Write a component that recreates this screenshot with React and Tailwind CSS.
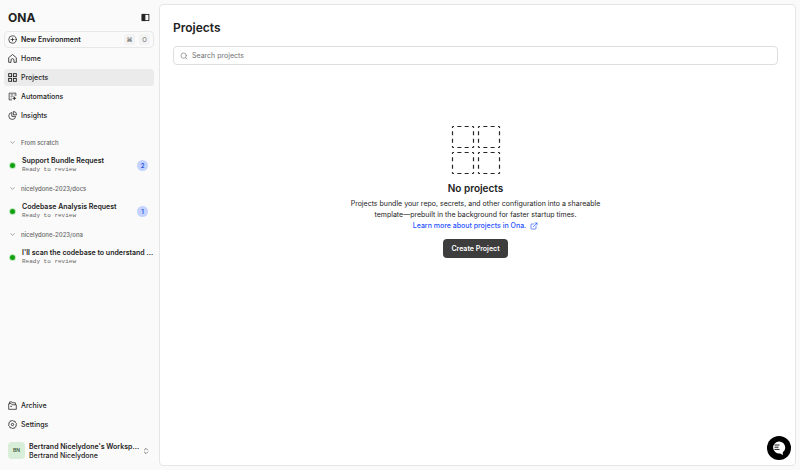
import { useState } from 'react';
import { ChevronDown, ChevronsUpDown, CirclePlus, ExternalLink, Search } from 'lucide-react';

const groups = [
  { name: 'From scratch', items: [{ title: 'Support Bundle Request', status: 'Ready to review', count: 2 }] },
  { name: 'nicelydone-2023/docs', items: [{ title: 'Codebase Analysis Request', status: 'Ready to review', count: 1 }] },
  { name: 'nicelydone-2023/ona', items: [{ title: "I'll scan the codebase to understand ...", status: 'Ready to review' }] },
];

// ── Icons ─────────────────────────────────────────────────────────────────────
function HomeIcon(props) {
  return (
    <svg viewBox="0 0 20 20" fill="none" stroke="currentColor" strokeWidth="1.8" strokeLinejoin="round" {...props}>
      <path d="M1.5 8.2 10 1.2l8.500 7V18.500h-5.300v-5a3.200 3.200 0 0 0-6.400 0v5H1.500Z" />
    </svg>
  );
}

function GridIcon(props) {
  return (
    <svg viewBox="0 0 20 20" fill="none" stroke="currentColor" strokeWidth="2" {...props}>
      <rect x="1.5" y="1.5" width="6.5" height="6.5" />
      <rect x="12" y="1.5" width="6.5" height="6.5" />
      <rect x="1.5" y="12" width="6.5" height="6.5" />
      <rect x="12" y="12" width="6.5" height="6.5" />
    </svg>
  );
}

function AutomationIcon(props) {
  return (
    <svg viewBox="0 0 20 20" fill="none" stroke="currentColor" strokeWidth="1.6" {...props}>
      <path d="M17.500 9V2.500h-15v15H9" />
      <path d="M6 6.500h5M13 6.500h2M6 10h2M10 10h2M6 13.500h2" />
      <path d="m14 10 1.200 2.800 2.800 1.200-2.800 1.200L14 18l-1.200-2.800L10 14l2.800-1.200Z" fill="currentColor" strokeWidth="0.6" />
    </svg>
  );
}

function InsightsIcon(props) {
  return (
    <svg viewBox="0 0 20 20" fill="none" stroke="currentColor" strokeWidth="1.7" strokeLinejoin="round" {...props}>
      <path d="M8.500 3.400a7.700 7.700 0 1 0 8.600 8.600H8.500Z" />
      <path d="M12 1v7.500h7.200A7.400 7.400 0 0 0 12 1Z" />
    </svg>
  );
}

function ArchiveIcon(props) {
  return (
    <svg viewBox="0 0 20 20" fill="none" stroke="currentColor" strokeWidth="1.7" strokeLinejoin="round" {...props}>
      <path d="M1.500 6h6l2 2.500h9v10h-17Z" />
      <path d="M3.500 6V2h5.500l1.500 2h6v4.500M5 12h4" />
    </svg>
  );
}

function GearIcon(props) {
  return (
    <svg viewBox="0 0 20 20" fill="none" stroke="currentColor" strokeWidth="1.8" strokeLinejoin="round" {...props}>
      <path d="m10 1 2.600 1.700 3.100.1.900 3 2.200 2.200L18 10.800l.2 3.100-2.600 1.700-1.400 2.800-3-.4L10 19l-2.500-1.500-3-.2-1-2.900L1.200 12 2.200 9.200 1.900 6.100l2.600-1.700 1.300-2.700 3 .3Z" />
      <circle cx="10" cy="10" r="2.600" />
    </svg>
  );
}

function PanelIcon(props) {
  return (
    <svg viewBox="0 0 16 16" fill="none" stroke="currentColor" strokeWidth="1.6" {...props}>
      <rect x="2" y="2.5" width="12" height="11" />
      <path d="M2 2.500h5v11H2Z" fill="currentColor" />
    </svg>
  );
}

function EmptyGrid(props) {
  return (
    <svg viewBox="0 0 50 50" fill="none" stroke="#262626" strokeWidth="1.2" {...props}>
      {[1.5, 27.5].map((y) =>
        [1.5, 27.5].map((x) => (
          <rect key={`${x}-${y}`} x={x} y={y} width="21" height="21" strokeDasharray="1.5 3.33 4 3.34 4 3.33 1.5 0" />
        ))
      )}
    </svg>
  );
}

function ChatIcon(props) {
  return (
    <svg viewBox="0 0 24 24" {...props}>
      <circle cx="12" cy="12" r="12" fill="#000" />
      <path d="M12.200 5.500a6 6 0 0 1 6 6c0 2-.9 3.700-2.400 4.800V19l-2.600-1.600A6 6 0 1 1 12.200 5.500Z" fill="#fff" />
      <path d="M7.500 9h5M7.500 11.200h4M7.500 13.400h5" stroke="#000" strokeWidth="0.9" />
    </svg>
  );
}

// ── Sidebar ───────────────────────────────────────────────────────────────────
function NavItem({ icon: Icon, label, active }) {
  return (
    <a
      href="#"
      aria-current={active ? 'page' : undefined}
      className={`flex h-[17px] items-center gap-1 rounded-sm px-1 ${active ? 'bg-[#ebebeb]' : ''}`}
    >
      <Icon className="size-[9px]" />
      {label}
    </a>
  );
}

function Key({ children }) {
  return (
    <kbd className="flex size-[11px] items-center justify-center rounded-xs bg-[#f3f3f3] font-[Inter,sans-serif] text-[6px] font-normal text-[#666]">
      {children}
    </kbd>
  );
}

function Group({ name, items }) {
  const [open, setOpen] = useState(true);

  return (
    <section>
      <button
        type="button"
        aria-expanded={open}
        onClick={() => setOpen(!open)}
        className="flex h-4 w-full items-center gap-1 px-1 text-[6px] text-[#666]"
      >
        <span className="flex w-[9px] justify-center">
          <ChevronDown className={`size-[7px] ${open ? '' : '-rotate-90'}`} />
        </span>
        {name}
      </button>
      {open && items.map((item) => (
        <a key={item.title} href="#" className="flex h-[30px] items-center gap-[5px] pl-1">
          <span className="flex w-[9px] shrink-0 justify-center">
            <span className="size-[5px] rounded-full bg-[#12a112] ring-1 ring-[#bfe8bf]" />
          </span>
          <span className="min-w-0 flex-1 whitespace-nowrap">
            <span className="block font-semibold leading-[9px]">{item.title}</span>
            <span className="block font-['Liberation_Mono',monospace] text-[6px] leading-[9px] text-[#666]">{item.status}</span>
          </span>
          {item.count && (
            <span className="mr-[6px] flex size-[11px] items-center justify-center rounded-full bg-[#c3d3fd] text-[6px] font-semibold text-[#2450e0]">
              {item.count}
            </span>
          )}
        </a>
      ))}
    </section>
  );
}

function Sidebar() {
  return (
    <aside className="flex w-[155px] shrink-0 flex-col pb-[10px] pr-[5px] pt-1">
      <div className="flex h-[27px] items-center justify-between px-1">
        <span className="text-[12px] font-bold leading-none">ONA</span>
        <button type="button" aria-label="Toggle sidebar">
          <PanelIcon className="size-[9px]" />
        </button>
      </div>

      <button
        type="button"
        className="flex h-[17px] items-center gap-1 rounded-sm border border-[#e8e8e8] px-[3px] font-semibold"
      >
        <CirclePlus className="size-[9px]" strokeWidth={2} />
        <span className="flex-1 text-left">New Environment</span>
        <Key>⌘</Key>
        <Key>O</Key>
      </button>

      <nav className="mt-[2px] flex flex-col gap-[2px] font-medium leading-[10px]">
        <NavItem icon={HomeIcon} label="Home" />
        <NavItem icon={GridIcon} label="Projects" active />
        <NavItem icon={AutomationIcon} label="Automations" />
        <NavItem icon={InsightsIcon} label="Insights" />
      </nav>

      <div className="mt-[10px] flex flex-1 flex-col font-medium">
        {groups.map((group) => (
          <Group key={group.name} {...group} />
        ))}
      </div>

      <nav className="flex flex-col gap-[2px] font-medium leading-[10px]">
        <NavItem icon={ArchiveIcon} label="Archive" />
        <NavItem icon={GearIcon} label="Settings" />
      </nav>
      <button type="button" className="mt-2 flex h-[19px] items-center gap-1 px-1 text-left">
        <span className="flex size-[17px] shrink-0 items-center justify-center rounded-sm bg-[#d8eed8] text-[5px] font-semibold text-[#3b5a3b]">BN</span>
        <span className="min-w-0 flex-1 whitespace-nowrap leading-[9px]">
          <span className="block font-semibold">Bertrand Nicelydone's Worksp...</span>
          <span className="block font-medium">Bertrand Nicelydone</span>
        </span>
        <ChevronsUpDown className="size-2 shrink-0 text-[#444]" />
      </button>
    </aside>
  );
}

export default function App() {
  const [query, setQuery] = useState('');

  return (
    <div className="flex min-h-screen bg-[#fafafa] px-1 font-[Inter,sans-serif] text-[7px] leading-[11px] text-[#222]">
      <Sidebar />

      <main className="my-1 flex flex-1 flex-col rounded-sm border border-[#e6e6e6] bg-white pl-[13px] pr-[17px]">
        <h1 className="mt-[15px] text-[12px] font-semibold leading-4">Projects</h1>
        <label className="mt-[10px] flex h-[19px] items-center gap-1 rounded-sm border border-[#dedede] px-[6px]">
          <Search className="size-2 text-[#777]" />
          <input
            type="text"
            aria-label="Search projects"
            placeholder="Search projects"
            value={query}
            onChange={(e) => setQuery(e.target.value)}
            className="flex-1 bg-transparent placeholder:text-[#707070] focus:outline-none"
          />
        </label>

        <div className="mt-[60px] flex flex-col items-center text-center">
          <EmptyGrid className="size-[50px]" />
          <h2 className="mt-[6px] text-[10px] font-semibold leading-[14px]">No projects</h2>
          <p className="mt-[3px] max-w-[260px]">
            Projects bundle your repo, secrets, and other configuration into a shareable template—prebuilt in the background for faster startup times.
          </p>
          <a href="#" className="flex items-center gap-1 font-medium text-[#1f51ff]">
            Learn more about projects in Ona.
            <ExternalLink className="size-2" />
          </a>
          <button type="button" className="mt-2 h-[19px] rounded-sm bg-[#3d3d3d] px-2 font-semibold text-white">
            Create Project
          </button>
        </div>
      </main>

      <button type="button" aria-label="Open chat" className="fixed bottom-[10px] right-[9px]">
        <ChatIcon className="size-6" />
      </button>
    </div>
  );
}
